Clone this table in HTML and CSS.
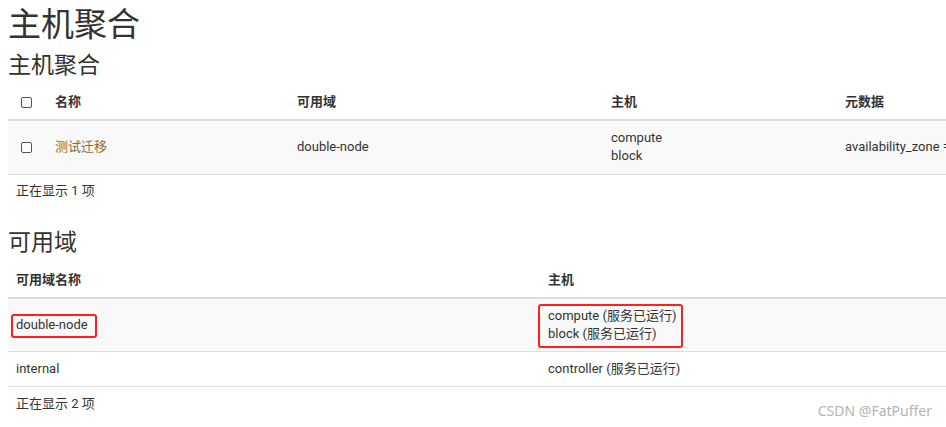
FILE: index.html
```html
<!DOCTYPE html>
<html lang="zh-CN">
<head>
    <meta charset="UTF-8">
    <title>主机聚合</title>
    <link rel="stylesheet" href="styles.css">
</head>
<body>

    <div class="page">
        <h1>主机聚合</h1>

        <h2>主机聚合</h2>
        <table class="table aggregates">
            <thead>
                <tr>
                    <th class="col-check"><span class="checkbox"></span></th>
                    <th class="col-name">名称</th>
                    <th class="col-zone">可用域</th>
                    <th class="col-hosts">主机</th>
                    <th class="col-meta">元数据</th>
                </tr>
            </thead>
            <tbody>
                <tr class="odd">
                    <td class="col-check"><span class="checkbox"></span></td>
                    <td class="col-name"><a href="#">测试迁移</a></td>
                    <td>double-node</td>
                    <td>compute<br>block</td>
                    <td class="col-meta">availability_zone = double-node</td>
                </tr>
            </tbody>
            <tfoot>
                <tr>
                    <td colspan="5">正在显示 1 项</td>
                </tr>
            </tfoot>
        </table>

        <h2 class="section">可用域</h2>
        <table class="table zones">
            <thead>
                <tr>
                    <th class="col-zname">可用域名称</th>
                    <th>主机</th>
                </tr>
            </thead>
            <tbody>
                <tr class="odd">
                    <td><span class="mark mark-zone">double-node</span></td>
                    <td><span class="mark mark-hosts">compute (服务已运行)<br>block (服务已运行)</span></td>
                </tr>
                <tr>
                    <td>internal</td>
                    <td>controller (服务已运行)</td>
                </tr>
            </tbody>
            <tfoot>
                <tr>
                    <td colspan="2">正在显示 2 项</td>
                </tr>
            </tfoot>
        </table>
    </div>

    <div class="watermark">CSDN @FatPuffer</div>

</body>
</html>
```

FILE: styles.css
```css
/* Reset styles */
* {
    margin: 0;
    padding: 0;
    box-sizing: border-box;
}

html, body {
    overflow: hidden;
}

body {
    font-family: 'Roboto', 'Noto Sans CJK SC', sans-serif;
    font-size: 13px;
    line-height: 18px;
    color: #333;
    background-color: #fff;
    width: 946px;
    height: 427px;
    position: relative;
}

.page {
    padding-left: 8px;
    width: 938px;
}

h1 {
    font-size: 33px;
    font-weight: normal;
    line-height: 40px;
    padding-top: 5px;
}

h2 {
    font-size: 23px;
    font-weight: normal;
    line-height: 28px;
    margin-top: 7px;
    margin-bottom: 5px;
}

h2.section {
    margin-top: 21px;
    margin-bottom: 6px;
}

/* Tables */
.table {
    border-collapse: collapse;
    text-align: left;
    table-layout: fixed;
}

.table th,
.table td {
    padding: 8px;
    vertical-align: middle;
    white-space: nowrap;
}

.table th {
    font-weight: bold;
    border-bottom: 2px solid #ddd;
}

.table tbody td {
    border-bottom: 1px solid #ddd;
}

.table tbody tr.odd td {
    background-color: #f9f9f9;
}

.table tfoot td {
    padding-top: 7px;
}

.table a {
    color: #8f6a32;
    text-decoration: none;
}

/* the metadata column runs past the right edge, as in the screenshot */
.aggregates {
    width: 938px;
}

.aggregates tbody td {
    height: 54px;
}

.aggregates .col-check {
    width: 39px;
    padding-left: 13px;
}

.aggregates .col-name {
    width: 242px;
}

.aggregates .col-zone {
    width: 314px;
}

.aggregates .col-hosts {
    width: 234px;
}

.aggregates .col-meta {
    overflow: hidden;
    padding-right: 0;
}

.checkbox {
    display: inline-block;
    width: 11px;
    height: 11px;
    border: 1px solid #555;
    border-radius: 2px;
    background-color: #fff;
    vertical-align: middle;
}

.zones {
    width: 938px;
}

.zones .col-zname {
    width: 532px;
}

.zones tfoot td {
    padding-top: 8px;
}

/* Red highlight boxes */
.mark {
    display: inline-block;
    position: relative;
}

.mark::after {
    content: "";
    position: absolute;
    border: 2px solid #ff1f1f;
    border-radius: 3px;
}

.mark-zone::after {
    top: -2px;
    bottom: -4px;
    left: -5px;
    right: -9px;
}

.mark-hosts::after {
    top: -3px;
    bottom: -5px;
    left: -10px;
    right: -7px;
}

.watermark {
    position: absolute;
    right: 14px;
    bottom: 7px;
    font-size: 14px;
    color: #b4b4b4;
    font-family: 'Noto Sans', sans-serif;
}
```
